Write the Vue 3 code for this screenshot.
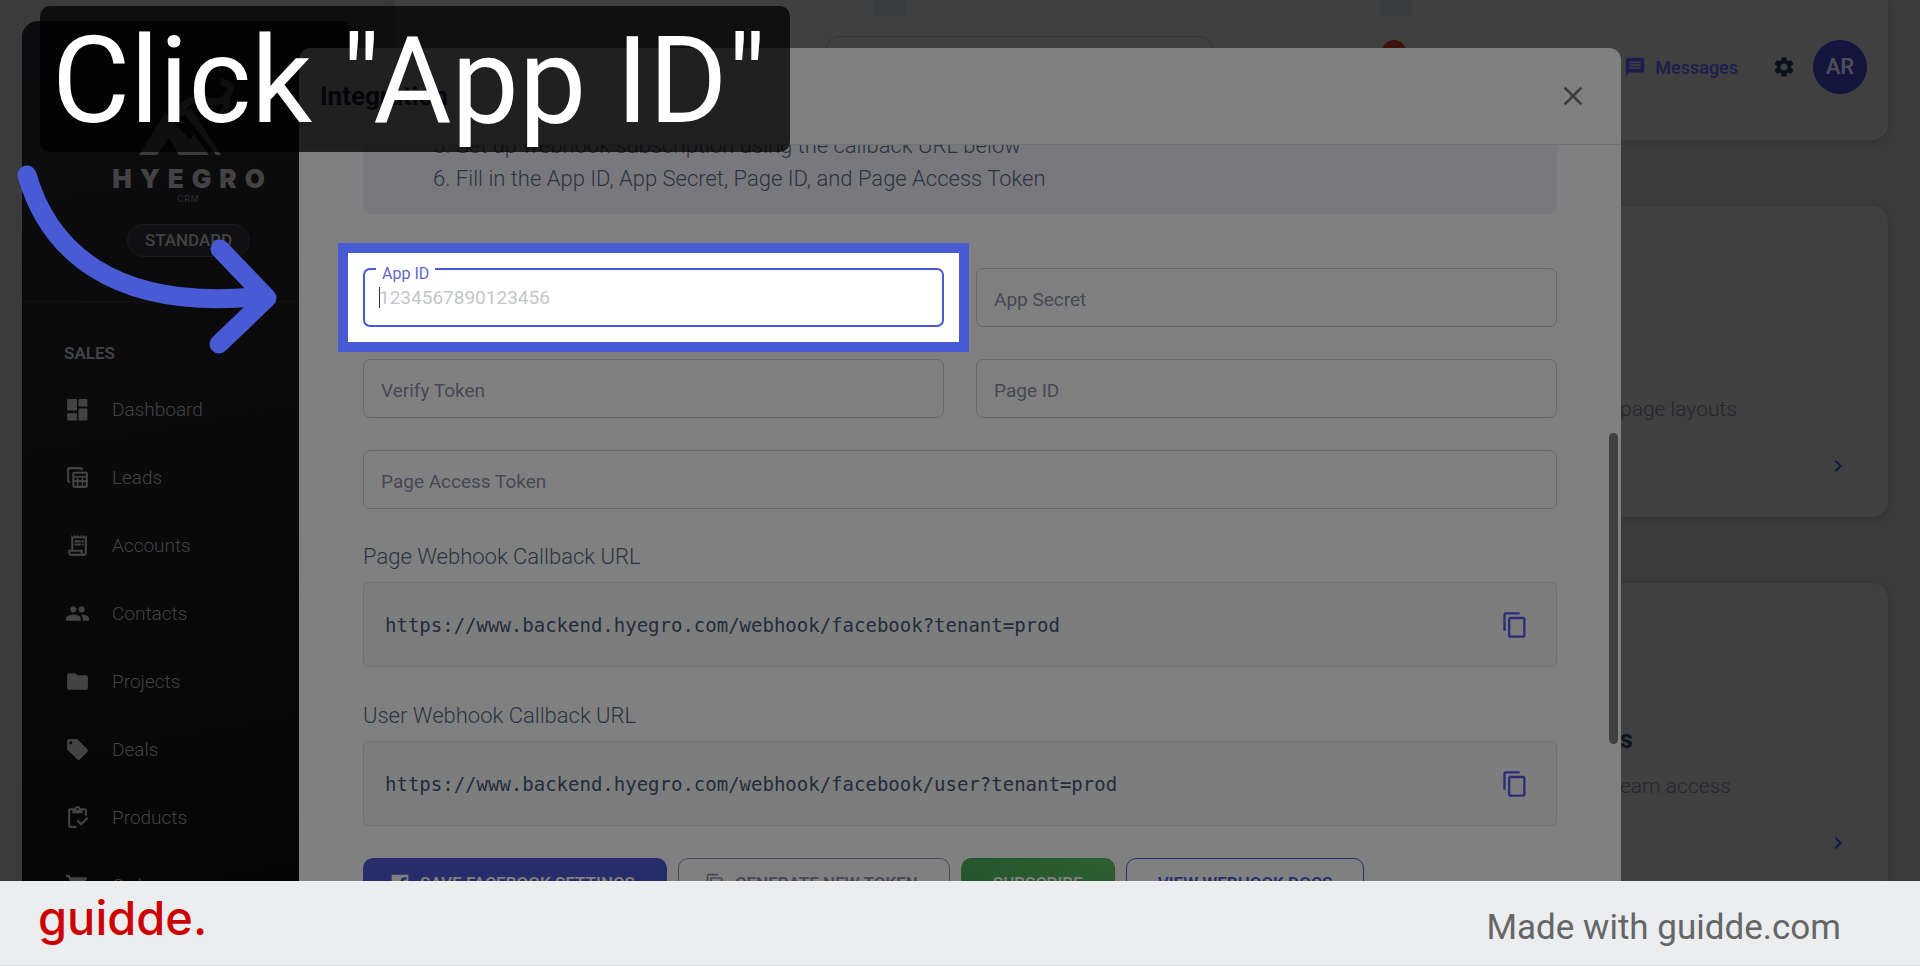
<template>
  <div class="page">
    <div class="stage">
      <aside class="sidebar">
        <div class="brand">
          <svg class="brand-mark" viewBox="0 0 104 78" aria-hidden="true">
            <path d="M2 77 L28 35 L53 62 L57 56 L72 77 H42 L32 60 L20 77 Z" />
            <path d="M46 34 L54 30 L84 77 H79 L60 52 Z" />
            <path class="hook" d="M43 38 Q46 20 66 22 Q82 26 88 20 Q100 6 84 4 M88 20 Q94 30 80 42" />
          </svg>
          <div class="brand-name">HYEGRO</div>
          <div class="brand-sub">CRM</div>
          <span class="plan">STANDARD</span>
        </div>
        <nav class="nav">
          <div class="nav-title">SALES</div>
          <a v-for="item in navItems" :key="item.label" href="#" class="nav-item">
            <svg viewBox="0 0 24 24" aria-hidden="true"><path :d="item.icon" fill-rule="evenodd" /></svg>
            <span>{{ item.label }}</span>
          </a>
        </nav>
      </aside>

      <main class="content">
        <header class="topbar">
          <a href="#" class="messages">
            <svg viewBox="0 0 24 24" aria-hidden="true"><path :d="icons.message" /></svg>
            Messages
          </a>
          <button class="icon-btn" aria-label="Settings">
            <svg viewBox="0 0 24 24" aria-hidden="true"><path :d="icons.settings" /></svg>
          </button>
          <span class="avatar">AR</span>
          <span class="tab-stub first"></span>
          <span class="tab-stub second"></span>
          <span class="search-stub"></span>
          <span class="badge"></span>
        </header>
        <section v-for="card in cards" :key="card.text" class="card">
          <h3>{{ card.title }}</h3>
          <p>{{ card.text }}</p>
          <svg viewBox="0 0 24 24" aria-hidden="true"><path :d="icons.chevron" /></svg>
        </section>
      </main>

      <div class="overlay">
        <div class="modal" role="dialog" aria-labelledby="modal-title">
          <div class="modal-header">
            <h2 id="modal-title">Integration</h2>
            <button class="icon-btn" aria-label="Close">
              <svg viewBox="0 0 24 24" aria-hidden="true"><path :d="icons.close" /></svg>
            </button>
          </div>
          <div class="modal-body">
            <ol class="steps" start="5">
              <li>5. Set up webhook subscription using the callback URL below</li>
              <li>6. Fill in the App ID, App Secret, Page ID, and Page Access Token</li>
            </ol>

            <form class="fields" @submit.prevent>
              <div
                v-for="field in fields"
                :key="field.id"
                class="field"
                :class="{ active: field.active, wide: field.wide }"
              >
                <label :for="field.id">{{ field.label }}</label>
                <input :id="field.id" v-model="form[field.id]" type="text" :placeholder="field.placeholder" />
                <span v-if="field.active" class="caret"></span>
              </div>
            </form>

            <div class="callbacks">
              <div v-for="cb in callbacks" :key="cb.title" class="callback">
                <h4>{{ cb.title }}</h4>
                <div class="url-box">
                  <code>{{ cb.url }}</code>
                  <button class="icon-btn" :aria-label="'Copy ' + cb.title">
                    <svg viewBox="0 0 24 24" aria-hidden="true"><path :d="icons.copy" /></svg>
                  </button>
                </div>
              </div>
            </div>

            <div class="actions">
              <button class="btn primary">
                <svg viewBox="0 0 24 24" aria-hidden="true"><path :d="icons.facebook" /></svg>
                SAVE FACEBOOK SETTINGS
              </button>
              <button class="btn neutral">
                <svg viewBox="0 0 24 24" aria-hidden="true"><path :d="icons.copy" /></svg>
                GENERATE NEW TOKEN
              </button>
              <button class="btn success">SUBSCRIBE</button>
              <button class="btn outline">VIEW WEBHOOK DOCS</button>
            </div>
          </div>
          <span class="scroll-thumb"></span>
        </div>
      </div>

      <div class="callout">Click "App ID"</div>
      <svg class="arrow" viewBox="0 0 280 210" aria-hidden="true">
        <path d="M27 25 C48 98 110 160 255 147" />
        <path d="M220 99 L267 148 L219 194" />
      </svg>
    </div>

    <footer class="footer">
      <a href="#" class="guidde">guidde.</a>
      <span class="made-with">Made with guidde.com</span>
    </footer>
  </div>
</template>

<script setup>
import { reactive } from 'vue'

const icons = {
  message: 'M20 2H4c-1.1 0-1.99.9-1.99 2L2 22l4-4h14c1.1 0 2-.9 2-2V4c0-1.1-.9-2-2-2zm-2 12H6v-2h12v2zm0-3H6V9h12v2zm0-3H6V6h12v2z',
  settings: 'M19.14 12.94c.04-.3.06-.61.06-.94 0-.32-.02-.64-.07-.94l2.03-1.58c.18-.14.23-.41.12-.61l-1.92-3.32c-.12-.22-.37-.29-.59-.22l-2.39.96c-.5-.38-1.03-.7-1.62-.94l-.36-2.54c-.04-.24-.24-.41-.48-.41h-3.84c-.24 0-.43.17-.47.41l-.36 2.54c-.59.24-1.13.57-1.62.94l-2.39-.96c-.22-.08-.47 0-.59.22L2.74 8.87c-.12.21-.08.47.12.61l2.03 1.58c-.05.3-.09.63-.09.94s.02.64.07.94l-2.03 1.58c-.18.14-.23.41-.12.61l1.92 3.32c.12.22.37.29.59.22l2.39-.96c.5.38 1.03.7 1.62.94l.36 2.54c.05.24.24.41.48.41h3.84c.24 0 .44-.17.47-.41l.36-2.54c.59-.24 1.13-.56 1.62-.94l2.39.96c.22.08.47 0 .59-.22l1.92-3.32c.12-.22.07-.47-.12-.61l-2.01-1.58zM12 15.6c-1.98 0-3.6-1.62-3.6-3.6s1.62-3.6 3.6-3.6 3.6 1.62 3.6 3.6-1.62 3.6-3.6 3.6z',
  close: 'M19 6.41 17.59 5 12 10.59 6.41 5 5 6.41 10.59 12 5 17.59 6.41 19 12 13.41 17.59 19 19 17.59 13.41 12z',
  chevron: 'M10 6 8.59 7.41 13.17 12l-4.58 4.59L10 18l6-6z',
  copy: 'M16 1H4c-1.1 0-2 .9-2 2v14h2V3h12V1zm3 4H8c-1.1 0-2 .9-2 2v14c0 1.1.9 2 2 2h11c1.1 0 2-.9 2-2V7c0-1.1-.9-2-2-2zm0 16H8V7h11v14z',
  facebook: 'M2 2h20v20h-6v-7h3v-3h-3v-2c0-1 .5-2 2-2h2V5h-3c-2.500 0-4 1.500-4 4v3h-3v3h3v7H2z',
}

const navItems = [
  { label: 'Dashboard', icon: 'M3 2h7.500a1 1 0 0 1 1 1v10H2V3a1 1 0 0 1 1-1zM14 2h6.500a1 1 0 0 1 1 1v6H13V3a1 1 0 0 1 1-1zM2 15.500h9.500v7H3a1 1 0 0 1-1-1zM13 11h8.500v10.500a1 1 0 0 1-1 1H13z' },
  { label: 'Leads', icon: 'M4 2h11a2 2 0 0 1 2 2v1h-2V4H4v11h1v2H4a2 2 0 0 1-2-2V4a2 2 0 0 1 2-2zM9 6.500h11a2 2 0 0 1 2 2V20a2 2 0 0 1-2 2H9a2 2 0 0 1-2-2V8.500a2 2 0 0 1 2-2zM9 8.500v2h11v-2zM9 12v2.500h2.500V12zM13 12v2.500h3V12zM17.500 12v2.500H20V12zM9 16.500V20h2.500v-3.500zM13 16.500V20h3v-3.500zM17.500 16.500V20H20v-3.500z' },
  { label: 'Accounts', icon: 'M19.5 3.5 18 2l-1.5 1.5L15 2l-1.5 1.5L12 2l-1.5 1.5L9 2 7.5 3.5 6 2v14H3v3c0 1.66 1.34 3 3 3h12c1.66 0 3-1.34 3-3V2l-1.5 1.5zM15 20H6c-.55 0-1-.45-1-1v-1h10v2zm4-1c0 .55-.45 1-1 1s-1-.45-1-1v-3H8V5h11v14zM9 7h6v2H9zM16 7h2v2h-2zM9 10h6v2H9zM16 10h2v2h-2z' },
  { label: 'Contacts', icon: 'M16 11c1.66 0 2.99-1.34 2.99-3S17.66 5 16 5c-1.66 0-3 1.34-3 3s1.34 3 3 3zm-8 0c1.66 0 2.99-1.34 2.99-3S9.66 5 8 5C6.34 5 5 6.34 5 8s1.34 3 3 3zm0 2c-2.33 0-7 1.17-7 3.5V19h14v-2.500c0-2.330-4.670-3.500-7-3.500zm8 0c-.29 0-.62.02-.97.05 1.16.84 1.97 1.97 1.97 3.45V19h6v-2.500c0-2.330-4.670-3.500-7-3.500z' },
  { label: 'Projects', icon: 'M10 4H4c-1.1 0-1.99.9-1.99 2L2 18c0 1.1.9 2 2 2h16c1.1 0 2-.9 2-2V8c0-1.1-.9-2-2-2h-8l-2-2z' },
  { label: 'Deals', icon: 'm21.41 11.58-9-9C12.05 2.22 11.55 2 11 2H4c-1.1 0-2 .9-2 2v7c0 .55.22 1.05.59 1.42l9 9c.36.36.86.58 1.41.58.55 0 1.05-.22 1.41-.59l7-7c.37-.36.59-.86.59-1.41 0-.55-.23-1.06-.59-1.42zM5.5 7C4.67 7 4 6.33 4 5.5S4.67 4 5.5 4 7 4.67 7 5.5 6.33 7 5.5 7z' },
  { label: 'Products', icon: 'M5 5h2v3h10V5h2v5h2V5c0-1.1-.9-2-2-2h-4.18C14.4 1.84 13.3 1 12 1s-2.4.84-2.82 2H5c-1.1 0-2 .9-2 2v15c0 1.1.9 2 2 2h6v-2H5V5zm7-2c.55 0 1 .45 1 1s-.45 1-1 1-1-.45-1-1 .45-1 1-1zM21 11.500 15.510 17l-3.010-3L11 15.500l4.510 4.500L22.500 13z' },
  { label: 'Orders', icon: 'M7 18c-1.1 0-1.99.9-1.99 2S5.9 22 7 22s2-.9 2-2-.9-2-2-2zM1 2v2h2l3.6 7.59-1.35 2.45c-.16.28-.25.61-.25.96 0 1.1.9 2 2 2h12v-2H7.42c-.14 0-.25-.11-.25-.25l.03-.12.9-1.63h7.45c.75 0 1.41-.41 1.75-1.03l3.58-6.49c.08-.14.12-.31.12-.48 0-.55-.45-1-1-1H5.21l-.94-2H1z' },
]

const cards = [
  { title: '', text: 'page layouts' },
  { title: 's', text: 'eam access' },
]

const fields = [
  { id: 'appId', label: 'App ID', placeholder: '1234567890123456', active: true },
  { id: 'appSecret', label: 'App Secret' },
  { id: 'verifyToken', label: 'Verify Token' },
  { id: 'pageId', label: 'Page ID' },
  { id: 'pageToken', label: 'Page Access Token', wide: true },
]

const form = reactive({ appId: '', appSecret: '', verifyToken: '', pageId: '', pageToken: '' })

const callbacks = [
  { title: 'Page Webhook Callback URL', url: 'https://www.backend.hyegro.com/webhook/facebook?tenant=prod' },
  { title: 'User Webhook Callback URL', url: 'https://www.backend.hyegro.com/webhook/facebook/user?tenant=prod' },
]
</script>

<style>
body {
  margin: 0;
  overflow: hidden;
}
</style>

<style scoped>
* {
  box-sizing: border-box;
}
h2, h3, h4, p, ol {
  margin: 0;
  padding: 0;
}
a {
  text-decoration: none;
  color: inherit;
}
button, input {
  font-family: inherit;
  margin: 0;
}
svg {
  display: block;
  fill: currentColor;
}
.page {
  display: flex;
  flex-direction: column;
  height: 100vh;
  font-family: Roboto, "Liberation Sans", sans-serif;
}
.stage {
  position: relative;
  flex: 1;
  min-height: 0;
  display: flex;
  gap: 40px;
  padding: 0 32px 0 22px;
  overflow: hidden;
  background: #3b3b3b;
}

/* sidebar */
.sidebar {
  flex: none;
  width: 333px;
  margin-top: 21px;
  border-radius: 16px 16px 0 0;
  background: linear-gradient(170deg, #0d0d0f, #0a0a0b 50%, #050505);
  color: #434344;
}
.brand {
  display: flex;
  flex-direction: column;
  align-items: center;
  height: 281px;
  padding-top: 57px;
  border-bottom: 1px solid #121214;
}
.brand-mark {
  width: 104px;
  height: 78px;
  color: #3c3c3c;
}
.hook {
  fill: none;
  stroke: currentColor;
  stroke-width: 7;
}
.brand-name {
  margin-top: 7px;
  padding-left: 8px;
  font: 900 26px/32px Inter, sans-serif;
  letter-spacing: 8px;
}
.brand-sub {
  font-size: 9px;
  line-height: 9px;
  letter-spacing: 1px;
  font-weight: 300;
}
.plan {
  margin-top: 20px;
  padding: 0 17px;
  border: 1px solid #1b1b1d;
  border-radius: 17px;
  background: #101012;
  font-size: 17px;
  line-height: 31px;
  font-weight: 500;
}
.nav {
  padding: 39px 0 0 42px;
}
.nav-title {
  font-size: 17px;
  line-height: 24px;
  font-weight: 600;
  margin-bottom: 10px;
}
.nav-item {
  display: flex;
  align-items: center;
  gap: 22px;
  height: 68px;
  padding-left: 1px;
  font-size: 19px;
  font-weight: 300;
}
.nav-item svg {
  width: 25px;
  height: 25px;
}

/* page behind the dialog */
.content {
  flex: 1;
  display: flex;
  flex-direction: column;
  gap: 66px;
}
.topbar {
  position: relative;
  flex: none;
  display: flex;
  align-items: flex-start;
  justify-content: flex-end;
  height: 140px;
  padding: 40px 21px 0 0;
  border-radius: 0 0 16px 16px;
  background: #404040;
  box-shadow: 0 2px 6px #343434;
}
.messages {
  display: flex;
  align-items: center;
  gap: 9px;
  height: 54px;
  margin-right: 34px;
  font-size: 18px;
  font-weight: 500;
  color: #1c1d4e;
}
.messages svg {
  width: 22px;
  height: 22px;
}
.icon-btn {
  display: flex;
  padding: 0;
  border: 0;
  background: none;
  color: inherit;
}
.topbar .icon-btn {
  align-items: center;
  height: 54px;
  margin-right: 17px;
  color: #0b121b;
}
.topbar .icon-btn svg {
  width: 24px;
  height: 24px;
}
.avatar {
  width: 54px;
  height: 54px;
  border-radius: 50%;
  background: #14153d;
  color: #4d4d58;
  font-size: 22px;
  line-height: 54px;
  font-weight: 600;
  text-align: center;
}
.tab-stub {
  position: absolute;
  top: 0;
  width: 32px;
  height: 16px;
  background: #3a3c3d;
}
.tab-stub.first {
  left: 32%;
}
.tab-stub.second {
  left: 66%;
}
.search-stub {
  position: absolute;
  top: 36px;
  left: 430px;
  width: 388px;
  height: 50px;
  border: 1px solid #363636;
  border-radius: 14px;
}
.badge {
  position: absolute;
  top: 40px;
  right: 482px;
  width: 24px;
  height: 24px;
  border-radius: 50%;
  background: #3c120c;
}
.card {
  flex: none;
  display: flex;
  flex-direction: column;
  height: 311px;
  padding: 140px 38px 39px 1225px;
  border-radius: 16px;
  background: #404040;
  box-shadow: 0 2px 6px #343434;
  white-space: nowrap;
}
.card h3 {
  height: 34px;
  font-size: 25px;
  line-height: 34px;
  font-weight: 700;
  color: #0e1420;
}
.card p {
  margin-top: 14px;
  font-size: 21px;
  line-height: 30px;
  font-weight: 300;
  color: #26262c;
}
.card svg {
  align-self: flex-end;
  margin-top: auto;
  width: 24px;
  height: 24px;
  color: #171944;
}

/* dialog */
.overlay {
  position: absolute;
  inset: 48px 0 0;
  display: flex;
  justify-content: center;
}
.modal {
  position: relative;
  display: flex;
  flex-direction: column;
  width: 90%;
  max-width: 1322px;
  border-radius: 12px 12px 0 0;
  background: #808080;
  color: #2b3342;
}
.modal-header {
  flex: none;
  display: flex;
  align-items: center;
  justify-content: space-between;
  height: 97px;
  padding: 0 32px 0 21px;
  border-bottom: 1px solid #727272;
}
.modal-header h2 {
  font-size: 26px;
  line-height: 32px;
  font-weight: 700;
  color: #101624;
}
.modal-header .icon-btn {
  color: #3e3e3e;
}
.modal-header svg {
  width: 32px;
  height: 32px;
}
.modal-body {
  flex: 1;
  min-height: 0;
  padding: 0 64px;
  overflow: hidden;
}
.steps {
  margin-top: -16px;
  padding: 0 0 19px 70px;
  border-radius: 0 0 6px 6px;
  background: #79787d;
  list-style: none;
  font-size: 22px;
  line-height: 33px;
  font-weight: 300;
}
.fields {
  display: grid;
  grid-template-columns: 1fr 1fr;
  gap: 32px;
  margin-top: 54px;
}
.field {
  position: relative;
  display: grid;
  height: 59px;
  font-size: 19px;
  color: #474756;
}
.field.wide {
  grid-column: 1 / -1;
}
.field label,
.field input {
  grid-area: 1 / 1;
}
.field label {
  align-self: center;
  justify-self: start;
  margin: 4px 0 0 18px;
  pointer-events: none;
}
.field input {
  width: 100%;
  padding: 0 17px;
  border: 1px solid #696969;
  border-radius: 7px;
  outline: 0;
  background: none;
  font-size: 19px;
}
.field.active::before {
  content: "";
  position: absolute;
  inset: -25px;
  border: 10px solid #485ad4;
  background: #fff;
}
.field.active input {
  position: relative;
  padding: 0 14px;
  border: 2px solid #485ad4;
}
.field.active input::placeholder {
  color: #c4c6c8;
  opacity: 1;
}
.field.active label {
  z-index: 1;
  align-self: start;
  margin: 0 0 0 13px;
  padding: 0 6px;
  background: #fff;
  font-size: 16px;
  line-height: 12px;
  color: #6169c4;
}
.caret {
  position: absolute;
  left: 16px;
  top: 19px;
  width: 1px;
  height: 21px;
  background: #30343c;
}
.callbacks {
  display: flex;
  flex-direction: column;
  gap: 36px;
  margin-top: 35px;
}
.callback h4 {
  margin-bottom: 12px;
  font-size: 22px;
  line-height: 26px;
  font-weight: 300;
}
.url-box {
  display: flex;
  align-items: center;
  justify-content: space-between;
  height: 85px;
  padding: 0 27px 0 21px;
  border: 1px solid #707070;
  border-radius: 5px;
  background: #7d7d7d;
}
.url-box code {
  font: 19px/24px "DejaVu Sans Mono", monospace;
  color: #222c3c;
}
.url-box .icon-btn {
  color: #2a2e78;
}
.url-box svg {
  width: 28px;
  height: 28px;
}
.actions {
  display: flex;
  gap: 11px;
  margin-top: 32px;
}
.btn {
  display: flex;
  align-items: center;
  justify-content: center;
  gap: 10px;
  height: 50px;
  padding: 0 31px;
  border: 1px solid transparent;
  border-radius: 10px;
  background: none;
  font-size: 17px;
  font-weight: 600;
  white-space: nowrap;
}
.btn svg {
  width: 20px;
  height: 20px;
  margin-left: -5px;
}
.btn.primary {
  background: #272d6a;
  color: #808080;
}
.btn.neutral {
  border-color: #484858;
  color: #484858;
}
.btn.success {
  background: linear-gradient(20deg, #22502a, #2d6031);
  color: #808080;
}
.btn.outline {
  border-color: #2a2e70;
  color: #2a2e70;
}
.scroll-thumb {
  position: absolute;
  top: 385px;
  right: 3px;
  width: 9px;
  height: 311px;
  border-radius: 5px;
  background: #404040;
}

/* annotations */
.callout {
  position: absolute;
  top: 6px;
  left: 40px;
  padding: 4px 24px 0 12px;
  border-radius: 10px;
  background: rgba(0, 0, 0, 0.75);
  color: #fff;
  font-size: 120px;
  line-height: 142px;
  white-space: nowrap;
}
.arrow {
  position: absolute;
  top: 150px;
  left: 0;
  width: 280px;
  height: 210px;
  fill: none;
  stroke: #485ad4;
  stroke-width: 19;
  stroke-linecap: round;
  stroke-linejoin: round;
}

.footer {
  flex: none;
  display: flex;
  align-items: center;
  justify-content: space-between;
  height: 85px;
  padding: 0 79px 0 38px;
  border-bottom: 1px solid #dcdde0;
  background: #ecedef;
}
.made-with {
  padding-top: 8px;
  font-size: 35px;
  color: #646667;
}
.guidde {
  padding-bottom: 10px;
  font: 500 47px/56px Inter, sans-serif;
  color: #c00;
}
</style>
